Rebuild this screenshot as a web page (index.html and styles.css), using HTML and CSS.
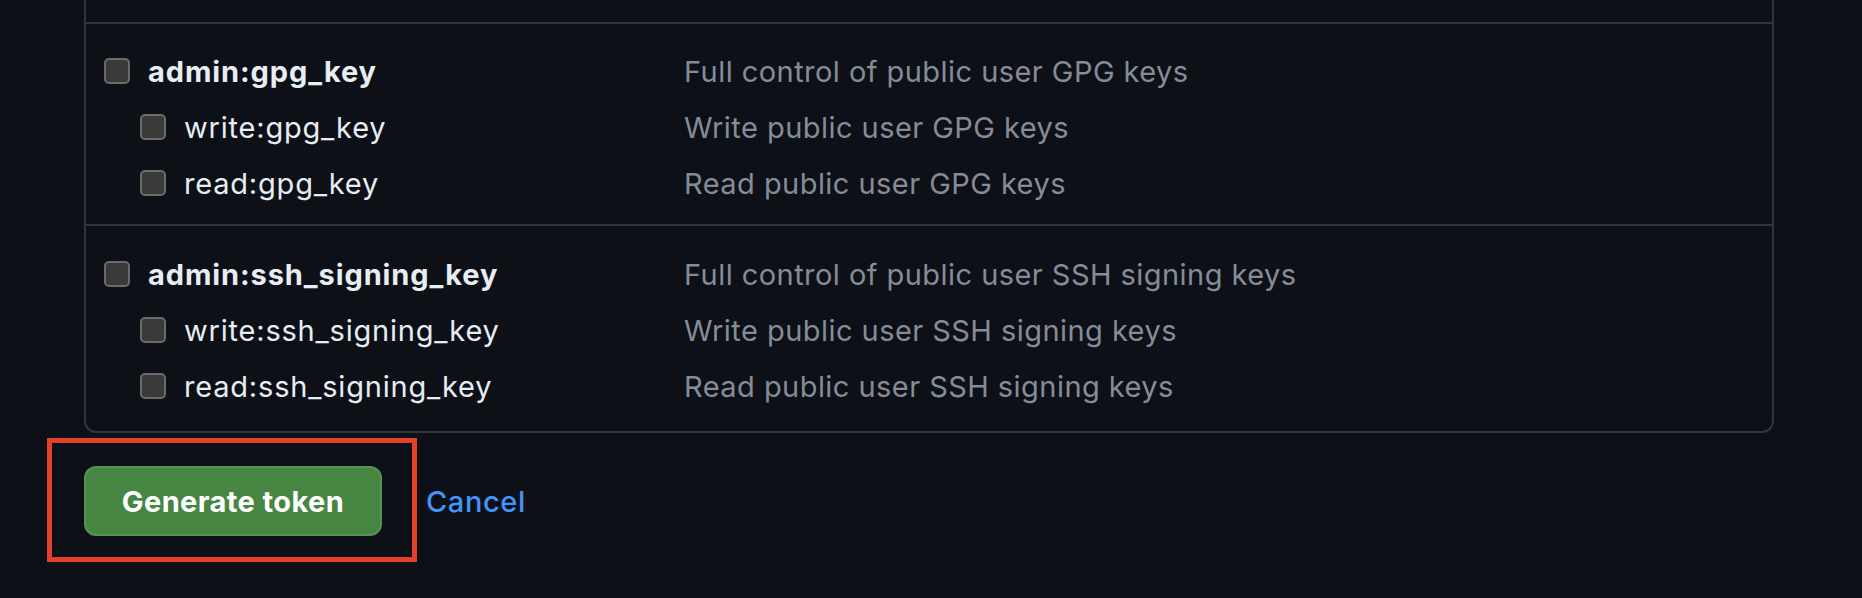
FILE: index.html
```html
<!DOCTYPE html>
<html lang="en">
<head>
<meta charset="utf-8">
<title>Token scopes</title>
<link rel="stylesheet" href="styles.css">
</head>
<body>
<div class="page">
  <div class="scopes">
    <div class="prev"></div>
    <div class="group">
      <div class="row">
        <label class="scope"><span class="cb"></span><span class="name strong">admin:gpg_key</span></label>
        <span class="desc">Full control of public user GPG keys</span>
      </div>
      <div class="row sub">
        <label class="scope"><span class="cb"></span><span class="name">write:gpg_key</span></label>
        <span class="desc">Write public user GPG keys</span>
      </div>
      <div class="row sub">
        <label class="scope"><span class="cb"></span><span class="name">read:gpg_key</span></label>
        <span class="desc">Read public user GPG keys</span>
      </div>
    </div>
    <div class="group last">
      <div class="row">
        <label class="scope"><span class="cb"></span><span class="name strong">admin:ssh_signing_key</span></label>
        <span class="desc">Full control of public user SSH signing keys</span>
      </div>
      <div class="row sub">
        <label class="scope"><span class="cb"></span><span class="name">write:ssh_signing_key</span></label>
        <span class="desc">Write public user SSH signing keys</span>
      </div>
      <div class="row sub">
        <label class="scope"><span class="cb"></span><span class="name">read:ssh_signing_key</span></label>
        <span class="desc">Read public user SSH signing keys</span>
      </div>
    </div>
  </div>
  <div class="actions">
    <button class="btn-primary" type="button">Generate token</button>
    <a class="cancel" href="#">Cancel</a>
    <div class="highlight"></div>
  </div>
</div>
</body>
</html>
```
FILE: styles.css
```css
html, body {
  margin: 0;
  padding: 0;
  background: #0d1117;
}
body {
  font-family: Inter, "Noto Sans", "Liberation Sans", sans-serif;
  color: #e6edf3;
}
.page {
  padding-left: 84px;
  width: 1690px;
  min-height: 598px;
}
.scopes {
  border: 2px solid #30363d;
  border-top: none;
  border-radius: 0 0 12px 12px;
  padding-bottom: 5px;
}
.prev {
  height: 22px;
}
.group {
  border-top: 2px solid #30363d;
  padding: 19px 0 13px 18px;
}
.group.last {
  padding-top: 20px;
  padding-bottom: 12px;
}
.row {
  display: flex;
  align-items: center;
  height: 56px;
}
.scope {
  display: flex;
  align-items: center;
  width: 580px;
  flex: none;
}
.row.sub .scope {
  padding-left: 36px;
  width: 544px;
}
.cb {
  width: 26px;
  height: 26px;
  box-sizing: border-box;
  border: 2px solid #6b6b6b;
  background: #3a3a3a;
  border-radius: 5px;
  margin-right: 18px;
  flex: none;
}
.name {
  font-size: 29px;
  letter-spacing: 0.8px;
  color: #e6edf3;
}
.name.strong {
  font-weight: 700;
  letter-spacing: 0.9px;
}
.desc {
  font-size: 29px;
  letter-spacing: 0.45px;
  color: #848d97;
}
.actions {
  position: relative;
  display: flex;
  align-items: center;
  margin-top: 33px;
}
.btn-primary {
  width: 298px;
  height: 70px;
  box-sizing: border-box;
  background: #468642;
  border: 2px solid #559350;
  border-radius: 12px;
  color: #ffffff;
  font-family: inherit;
  font-size: 29px;
  font-weight: 700;
  letter-spacing: 0.4px;
  cursor: pointer;
}
.cancel {
  margin-left: 44px;
  color: #4493f8;
  font-size: 29px;
  font-weight: 500;
  letter-spacing: 0.6px;
  text-decoration: none;
}
.highlight {
  position: absolute;
  left: -37px;
  top: -28px;
  width: 370px;
  height: 124px;
  box-sizing: border-box;
  border: 5px solid #e5402a;
  pointer-events: none;
}
```
